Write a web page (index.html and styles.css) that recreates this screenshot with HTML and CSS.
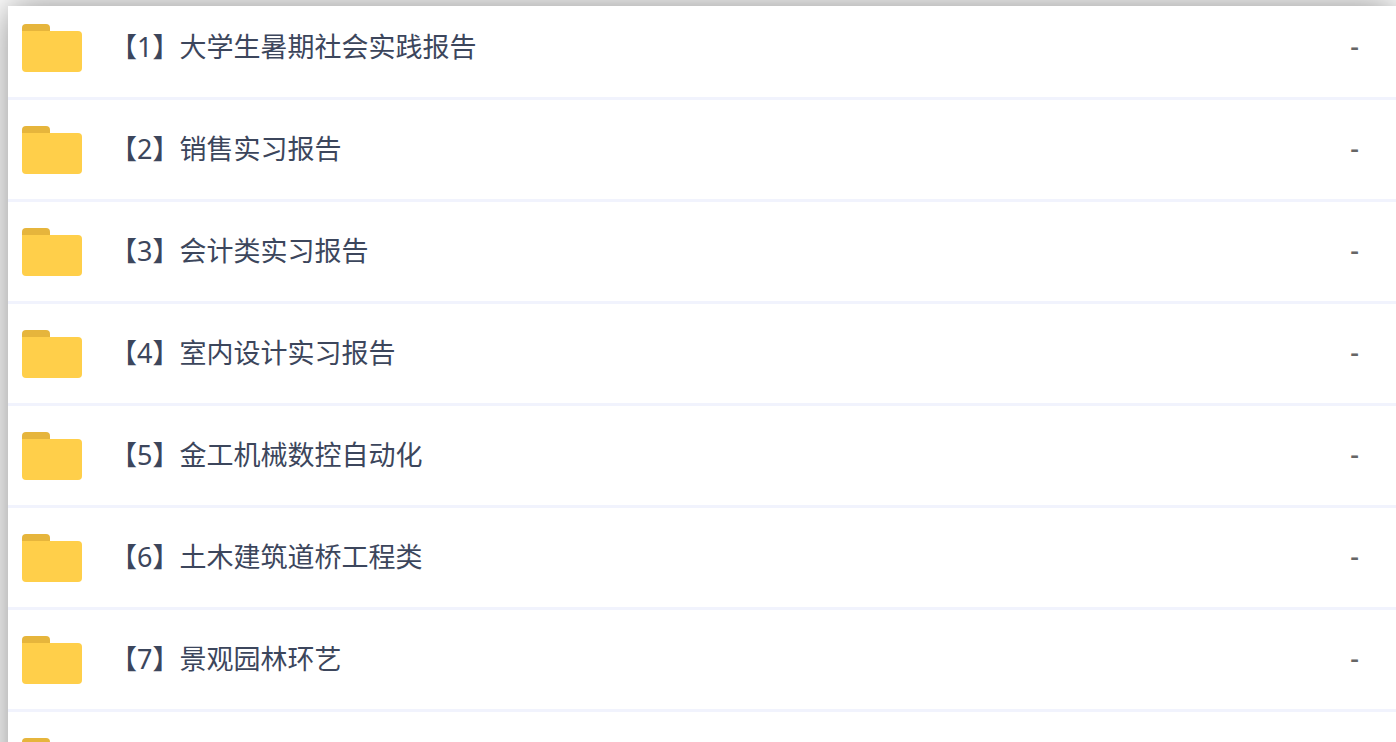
FILE: index.html
```
<!DOCTYPE html>
<html lang="zh-CN">
<head>
    <meta charset="UTF-8">
    <meta name="viewport" content="width=device-width, initial-scale=1.0">
    <title>实习报告</title>
    <link rel="stylesheet" href="styles.css">
</head>
<body>
    <!-- folder icon, shared by every row -->
    <svg class="sprite" aria-hidden="true">
        <symbol id="folder" viewBox="0 0 60 50">
            <path fill="#e6b53c" d="M0 14V5Q0 1 4 1H24Q28 1 28 5V14Z"/>
            <path fill="#ffcf4a" d="M0 8H56Q60 8 60 12V45Q60 49 56 49H4Q0 49 0 45Z"/>
        </symbol>
    </svg>

    <main class="panel">
        <ul class="files">
            <li>
                <svg class="icon"><use href="#folder"/></svg>
                <a href="#">【1】大学生暑期社会实践报告</a>
                <span class="size">-</span>
            </li>
            <li>
                <svg class="icon"><use href="#folder"/></svg>
                <a href="#">【2】销售实习报告</a>
                <span class="size">-</span>
            </li>
            <li>
                <svg class="icon"><use href="#folder"/></svg>
                <a href="#">【3】会计类实习报告</a>
                <span class="size">-</span>
            </li>
            <li>
                <svg class="icon"><use href="#folder"/></svg>
                <a href="#">【4】室内设计实习报告</a>
                <span class="size">-</span>
            </li>
            <li>
                <svg class="icon"><use href="#folder"/></svg>
                <a href="#">【5】金工机械数控自动化</a>
                <span class="size">-</span>
            </li>
            <li>
                <svg class="icon"><use href="#folder"/></svg>
                <a href="#">【6】土木建筑道桥工程类</a>
                <span class="size">-</span>
            </li>
            <li>
                <svg class="icon"><use href="#folder"/></svg>
                <a href="#">【7】景观园林环艺</a>
                <span class="size">-</span>
            </li>
            <li>
                <svg class="icon"><use href="#folder"/></svg>
            </li>
        </ul>
    </main>
</body>
</html>
```
FILE: styles.css
```
* {margin: 0; padding: 0; box-sizing: border-box;}
body {height: 100vh; overflow: hidden; padding: 6px 0 0 8px; background-color: #ffffff; color: #3c465c; font-family: "Noto Sans", "Noto Sans CJK SC", sans-serif;}
li {list-style-type: none;}
.sprite {display: none;}

.panel {background-color: #ffffff; box-shadow: 0 0 36px rgba(0, 0, 0, 0.46);}

.files li {height: 102px; padding: 0 37px 0 14px; display: flex; align-items: center; border-bottom: 3px solid #f1f3fd;}
.files li:first-child {height: 94px; padding-bottom: 8px;}
.files .icon {width: 60px; height: 50px; flex: none;}
.files a {flex: 1; margin-left: 28px; padding-bottom: 2px; color: inherit; text-decoration: none; font-size: 27px; line-height: 38px;}
.files .size {padding-bottom: 4px; color: #666666; font-size: 27px; line-height: 36px; font-weight: 500;}
```
